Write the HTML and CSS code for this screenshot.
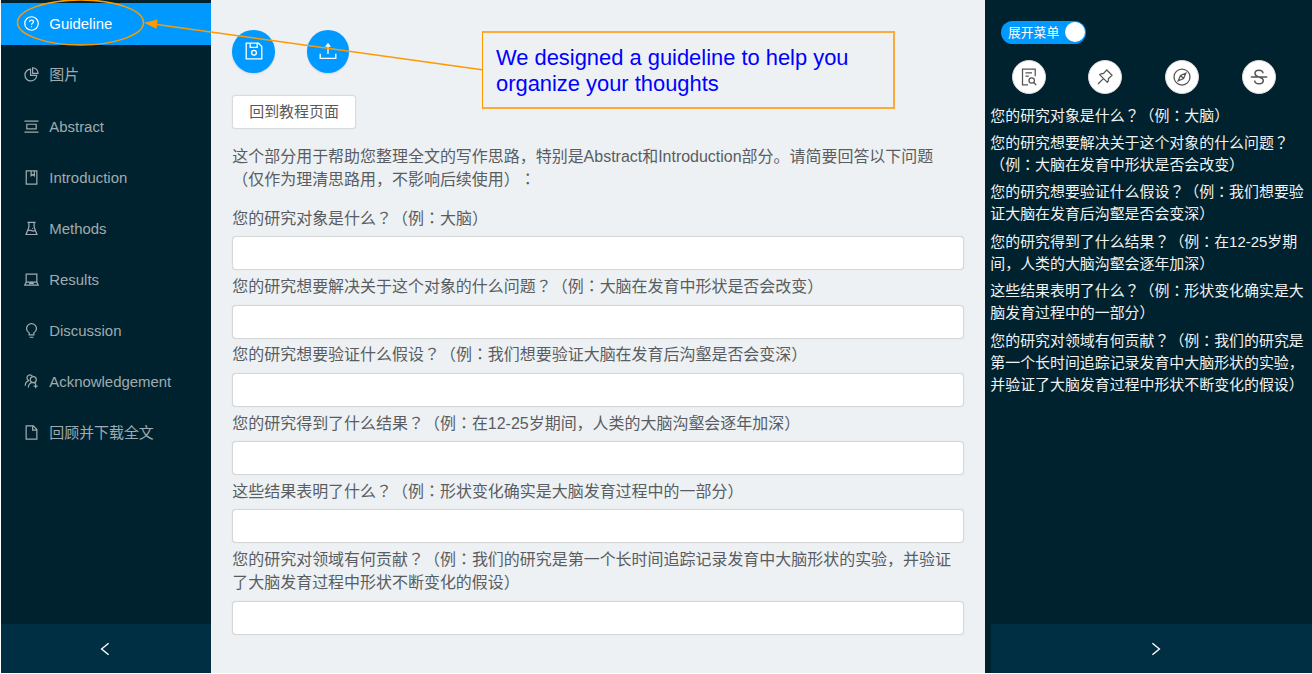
FILE: index.html
```html
<!DOCTYPE html>
<html lang="en">
<head>
<meta charset="utf-8">
<title>Guideline</title>
<link rel="stylesheet" href="styles.css">
</head>
<body>
<div class="app">
  <aside class="sider">
    <nav class="menu">
      <a class="item active"><svg class="ico" viewBox="0 0 16 16"><circle cx="8" cy="8" r="7.2"/><path d="M5.9 6.5C5.9 5.2 6.8 4.4 8 4.4s2.1.8 2.1 1.9C10.1 7.7 8 7.7 8 9.4M8 10.8v1.3"/></svg>Guideline</a>
      <a class="item cjk"><svg class="ico" viewBox="0 0 16 16"><path d="M7 2.3A6.3 6.3 0 1 0 13.6 9H7zM9.2.8A6 6 0 0 1 15 6.7H9.2z"/></svg><span>图片</span></a>
      <a class="item"><svg class="ico" viewBox="0 0 16 16"><path d="M.5 2.2h15M.5 14h15M3 5.6h10v4.9H3z"/></svg>Abstract</a>
      <a class="item"><svg class="ico" viewBox="0 0 16 16"><path d="M2.4 1h11.3v14H2.4zM7.6 1v5.2l1.700-1.300L11 6.200V1"/></svg>Introduction</a>
      <a class="item"><svg class="ico" viewBox="0 0 16 16"><path d="M3.6 1.5h8.8M5.2 1.500v5L2.200 14.400h11.600L10.800 6.500v-5M4 10.300c1.500-1 2.500-.6 4 0s2.500.8 3.900-.2M8.500 8h1"/></svg>Methods</a>
      <a class="item"><svg class="ico" viewBox="0 0 16 16"><path d="M2.300 2.200h11.400v8.700H2.300zM2.300 10.900L.8 14h14.400l-1.500-3.100M5.900 13.100l.5-.9h3.200l.5.9"/></svg>Results</a>
      <a class="item"><svg class="ico" viewBox="0 0 16 16"><path d="M5.500 12.600v-2.200A5.200 5.200 0 0 1 2.700 6a5.300 5.300 0 0 1 10.600 0 5.200 5.200 0 0 1-2.800 4.400v2.200zM5.900 15.200h4.200"/></svg>Discussion</a>
      <a class="item"><svg class="ico" viewBox="0 0 16 16"><path d="M5.500 7.100A3.200 3.200 0 1 1 9 2.200M1.300 12.600c0-2.700 1.500-4.800 4.200-5.500M4.600 14.400c.2-2.700 1.600-4.600 3.700-5.300"/><circle cx="9.900" cy="6" r="3.200"/><path d="M10 9.200c1.200 0 2 .3 2.800 1M12.400 10.700v4.400M10.200 12.900h4.400"/></svg>Acknowledgement</a>
      <a class="item cjk"><svg class="ico" viewBox="0 0 16 16"><path d="M2.300 1h7.600l3.800 3.800V15H2.300zM9.200 1v4.500h4.500"/></svg><span>回顾并下载全文</span></a>
    </nav>
    <div class="trigger left"><svg class="arrow" viewBox="0 0 10 14"><path d="M8.600 1.300L1.600 7l7 5.700"/></svg></div>
  </aside>

  <main class="content">
    <div class="actions">
      <button class="round"><svg class="act" viewBox="0 0 18 18"><path d="M1.200 1.200h12.300l3.300 3.300v12.300H1.200zM5.200 1.200v4.100h7V1.200"/><circle cx="9" cy="10.800" r="2.400"/></svg></button>
      <button class="round"><svg class="act" viewBox="0 0 18 18"><path d="M1.200 11.700v4.700h15.600v-4.700M9 12V3"/><path class="solid" d="M9 .8l3 4H6z"/></svg></button>
    </div>
    <button class="back">回到教程页面</button>
    <p class="intro">这个部分用于帮助您整理全文的写作思路，特别是Abstract和Introduction部分。请简要回答以下问题（仅作为理清思路用，不影响后续使用）<i>：</i></p>
    <form class="form">
      <label class="field">您的研究对象是什么<i>？</i>（例<i>：</i>大脑）<input class="box"></label>
      <label class="field">您的研究想要解决关于这个对象的什么问题<i>？</i>（例<i>：</i>大脑在发育中形状是否会改变）<input class="box"></label>
      <label class="field">您的研究想要验证什么假设<i>？</i>（例<i>：</i>我们想要验证大脑在发育后沟壑是否会变深）<input class="box"></label>
      <label class="field">您的研究得到了什么结果<i>？</i>（例<i>：</i>在12-25岁期间，人类的大脑沟壑会逐年加深）<input class="box"></label>
      <label class="field">这些结果表明了什么<i>？</i>（例<i>：</i>形状变化确实是大脑发育过程中的一部分）<input class="box"></label>
      <label class="field">您的研究对领域有何贡献<i>？</i>（例<i>：</i>我们的研究是第一个长时间追踪记录发育中大脑形状的实验，并验证了大脑发育过程中形状不断变化的假设）<input class="box"></label>
    </form>
  </main>

  <aside class="panel">
    <div class="switch"><span class="word">展开菜单</span><span class="knob"></span></div>
    <div class="tools">
      <button class="tool"><svg class="tico" viewBox="0 0 18 18"><path d="M8 16.800H2.500V1.200h12.700v7M5.500 4.800h6.500M5.500 8h3.300"/><circle cx="11.700" cy="12.500" r="2.700"/><path d="M13.700 14.500l2.500 2.500"/></svg></button>
      <button class="tool"><svg class="tico" viewBox="0 0 18 18"><path d="M10.800 2L16 7.200l-3.600 3.500c.3 1.600-.1 2.800-1 3.700L3.600 6.600c1-.9 2.200-1.300 3.700-1zM7.400 10.600L2 16"/></svg></button>
      <button class="tool"><svg class="tico" viewBox="0 0 18 18"><circle cx="9" cy="9" r="8"/><path d="M12.800 5.200L10.600 10.500 5.200 12.800 7.500 7.400zM7.500 7.400l3.100 3.100"/></svg></button>
      <button class="tool"><svg class="tico bold" viewBox="0 0 18 18"><path d="M.8 9h16.400M13 5.300C12.800 3.300 11.300 2.200 9 2.200S5 3.400 5 5.400C5 7.800 7.300 8.400 9 9c2.500.8 4.300 1.500 4.300 3.500 0 2.100-1.700 3.300-4.300 3.300s-4.200-1.200-4.400-3.300"/></svg></button>
    </div>
    <ul class="notes">
      <li>您的研究对象是什么<i>？</i>（例<i>：</i>大脑）</li>
      <li>您的研究想要解决关于这个对象的什么问题<i>？</i>（例<i>：</i>大脑在发育中形状是否会改变）</li>
      <li>您的研究想要验证什么假设<i>？</i>（例<i>：</i>我们想要验证大脑在发育后沟壑是否会变深）</li>
      <li>您的研究得到了什么结果<i>？</i>（例<i>：</i>在12-25岁期间，人类的大脑沟壑会逐年加深）</li>
      <li>这些结果表明了什么<i>？</i>（例<i>：</i>形状变化确实是大脑发育过程中的一部分）</li>
      <li>您的研究对领域有何贡献<i>？</i>（例<i>：</i>我们的研究是第一个长时间追踪记录发育中大脑形状的实验，并验证了大脑发育过程中形状不断变化的假设）</li>
    </ul>
    <div class="trigger right"><svg class="arrow" viewBox="0 0 10 14"><path d="M1.400 1.300l7 5.700-7 5.700"/></svg></div>
  </aside>
</div>

<svg class="marks" viewBox="0 0 1312 674">
  <ellipse cx="80.500" cy="22.500" rx="63" ry="22.500"/>
  <path d="M155 24.200L482 69.700"/>
  <path class="head" d="M144 22.700L157.700 19.600 156.500 28.800z"/>
</svg>
<div class="callout">We designed a guideline to help you organize your thoughts</div>
</body>
</html>
```
FILE: styles.css
```css
* { box-sizing: border-box; }
body {
  margin: 0;
  width: 1312px;
  height: 674px;
  overflow: hidden;
  background: #fff;
  font-family: "Liberation Sans", "Noto Sans CJK SC", sans-serif;
  text-spacing-trim: space-all;
}
/* full-width question marks and colons sit centred in their cell */
i { font-family: "Liberation Sans", "Noto Sans CJK TC", sans-serif; font-style: normal; }
svg { display: block; fill: none; stroke: currentColor; stroke-width: 1.1; }
button { border: 0; padding: 0; font-family: inherit; }

.app { display: flex; height: 673px; padding-left: 1px; }

.sider { width: 210px; display: flex; flex-direction: column; background: #00222e; flex: none; }
.menu { flex: 1; padding-top: 2.500px; display: flex; flex-direction: column; gap: 8.500px; }
.item {
  display: flex;
  align-items: center;
  gap: 10.700px;
  height: 42.630px;
  padding-left: 22.600px;
  font-size: 14.930px;
  color: #a0abaf;
  flex: none;
}
.item.active { background: #0099ff; color: #fff; }
.cjk span { padding-bottom: 2.500px; }
.ico { width: 15px; height: 15px; flex: none; stroke-width: 1.300; }
.trigger {
  height: 49.500px;
  padding-top: 1px;
  display: flex;
  align-items: center;
  justify-content: center;
  background: #002e42;
  color: #fff;
}
.left { padding-right: 3px; }
.arrow { width: 10px; height: 14px; stroke-width: 1.400; }

.content { width: 774px; flex: none; background: #edf1f4; padding: 30px 21.500px 0 21.300px; color: #595d61; font-size: 15.970px; line-height: 23.500px; }
.actions { display: flex; gap: 32px; }
.round {
  width: 42.600px;
  height: 42.600px;
  border-radius: 50%;
  background: #0099ff;
  color: #fff;
  display: flex;
  align-items: center;
  justify-content: center;
  box-shadow: 0 1px 2px rgba(0, 0, 0, .12);
}
.act { width: 18px; height: 18px; stroke-width: 1.300; }
.solid { fill: currentColor; stroke: none; }
.back {
  display: block;
  margin-top: 22px;
  width: 123.500px;
  height: 34px;
  padding-bottom: 1.500px;
  border: 1px solid #d9dadb;
  border-radius: 3.500px;
  box-shadow: 0 0 1px #cfcfcf;
  background: #fff;
  color: #595959;
  font-size: 14.930px;
}
.intro { margin: 16px 0 15.400px; }
.form { display: flex; flex-direction: column; gap: 4.700px; }
.field { display: block; }
.box {
  display: block;
  width: 100%;
  height: 34px;
  margin-top: 6px;
  border: 1px solid #d5d7d9;
  border-radius: 4px;
  box-shadow: 0 0 1px #cfcfcf;
  background: #fff;
}

.panel { flex: 1; display: flex; flex-direction: column; background: #00222e; min-width: 0; }
.switch {
  width: 85px;
  height: 23.500px;
  margin: 20.500px 0 0 16px;
  padding: 0 1.500px 0 7px;
  border-radius: 12px;
  background: #0099ff;
  color: #fff;
  font-size: 12.800px;
  display: flex;
  align-items: center;
  justify-content: space-between;
}
.word { padding-bottom: 2.500px; }
.knob { width: 20px; height: 20px; border-radius: 50%; background: #fff; }
.tools { display: flex; gap: 42.700px; padding: 15.500px 0 0 26.700px; }
.tool {
  width: 34px;
  height: 34px;
  border-radius: 50%;
  border: 1px solid #d9d9d9;
  background: #fff;
  color: #555;
  display: flex;
  align-items: center;
  justify-content: center;
}
.tico { width: 18px; height: 18px; stroke-width: 1.250; flex: none; }
.bold { stroke-width: 1.500; }
.notes {
  flex: 1;
  list-style: none;
  margin: 0;
  padding: 11.200px 4px 0 5.300px;
  display: flex;
  flex-direction: column;
  gap: 5.400px;
  color: #f0f2f3;
  font-size: 14.930px;
  line-height: 22px;
}
.right { margin-left: 5.500px; padding-left: 9px; }

.marks { position: absolute; left: 0; top: 0; width: 1312px; height: 674px; stroke: #ff9900; stroke-width: 1.500; pointer-events: none; }
.head { fill: #ff9900; stroke: none; }
.callout {
  position: absolute;
  left: 482px;
  top: 31px;
  width: 413px;
  height: 78px;
  padding: 12px 40px 0 13px;
  border: 2px solid #fcaa3a;
  border-left: 1px solid #ff9900;
  color: #0000ff;
  font-size: 21.900px;
  line-height: 26px;
}
```
